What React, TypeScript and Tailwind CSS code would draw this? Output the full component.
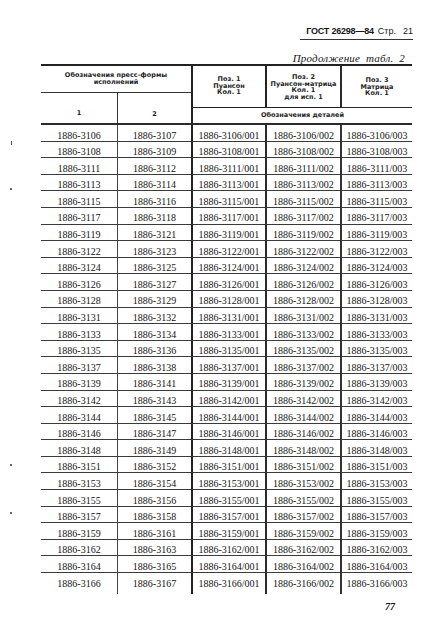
import React from "react";

const c1 = ["3106","3108","3111","3113","3115","3117","3119","3122","3124","3126","3128","3131","3133","3135","3137","3139","3142","3144","3146","3148","3151","3153","3155","3157","3159","3162","3164","3166"];
const c2 = ["3107","3109","3112","3114","3116","3118","3121","3123","3125","3127","3129","3132","3134","3136","3138","3141","3143","3145","3147","3149","3152","3154","3156","3158","3161","3163","3165","3167"];

export default function App() {
  return (
    <div className="relative w-[432px] h-[640px] overflow-hidden bg-white text-[#161616]">
      {/* scan specks */}
      <span className="absolute left-[11px] top-[141px] w-[1px] h-[4px] bg-[#555]" />
      <span className="absolute left-[10px] top-[188px] w-[2px] h-[2px] bg-[#666]" />
      <span className="absolute left-[10px] top-[464px] w-[2px] h-[2px] bg-[#666]" />
      <span className="absolute left-[10px] top-[512px] w-[2px] h-[2px] bg-[#666]" />

      {/* running head */}
      <div className="pl-[300px] pt-[26px]">
        <div className="w-[113px] border-b border-[#333] pb-[2px] flex justify-end items-baseline whitespace-nowrap text-[9px] leading-[11px] font-['Liberation_Sans',sans-serif]">
          <span className="font-bold tracking-[-0.2px]">ГОСТ 26298—84</span>
          <span className="ml-[4px]">Стр.</span>
          <span className="ml-[7px]">21</span>
        </div>
      </div>

      <div className="mt-[12px] pr-[27px] text-right italic text-[11px] leading-[12px] tracking-[0.2px] whitespace-nowrap font-['Liberation_Serif',serif]">
        Продолжение&nbsp; табл.&nbsp; 2
      </div>

      {/* table */}
      <div className="ml-[41px] w-[371px] border-t-2 border-[#222]">
        {/* header */}
        <div className="grid grid-cols-[76px_74px_74px_75px_72px] grid-rows-[27px_15px_15px] border-b-2 border-[#2a2a2a] text-[6.5px] leading-[6.5px] font-bold font-['DejaVu_Sans',sans-serif] text-[#1e1e1e]">
          <div className="col-start-1 col-span-2 row-start-1 border-b border-[#333] flex flex-col items-center justify-center pb-[1px]">
            <span>Обозначения пресс-формы</span>
            <span>исполнений</span>
          </div>
          <div className="col-start-1 row-start-2 row-span-2 flex items-end justify-center pb-[7px]">1</div>
          <div className="col-start-2 row-start-2 row-span-2 border-l border-[#333] flex items-end justify-center pb-[6px]">2</div>
          <div className="col-start-3 row-start-1 row-span-2 border-l-2 border-b border-[#222] flex flex-col items-center pt-[10px]">
            <span>Поз. 1</span>
            <span>Пуансон</span>
            <span>Кол. 1</span>
          </div>
          <div className="col-start-4 row-start-1 row-span-2 border-l-2 border-b border-[#222] flex flex-col items-center pt-[8px] gap-[0.2px]">
            <span>Поз. 2</span>
            <span>Пуансон-матрица</span>
            <span>Кол. 1</span>
            <span>для исп. 1</span>
          </div>
          <div className="col-start-5 row-start-1 row-span-2 border-l-2 border-b border-[#2a2a2a] flex flex-col items-center pt-[11px]">
            <span>Поз. 3</span>
            <span>Матрица</span>
            <span>Кол. 1</span>
          </div>
          <div className="col-start-3 col-span-3 row-start-3 border-l-2 border-[#222] flex items-center justify-center">
            Обозначения деталей
          </div>
        </div>

        {/* body */}
        <div className="grid grid-cols-[76px_74px_74px_75px_72px] text-[10px] leading-[10px] font-['Liberation_Serif',serif] text-[#141414]">
          {c1.map((a, i) => {
            const last = i === c1.length - 1;
            const row = last ? "h-[21px]" : "h-[16.6px] border-b border-b-[#3a3a3a]";
            const cell = `flex justify-center items-start pt-[5.5px] ${row}`;
            return (
              <React.Fragment key={a}>
                <div className={cell}>1886-{a}</div>
                <div className={`${cell} border-l border-l-[#444]`}>1886-{c2[i]}</div>
                <div className={`${cell} border-l-2 border-l-[#222]`}>1886-{a}/001</div>
                <div className={`${cell} border-l-2 border-l-[#2a2a2a]`}>1886-{a}/002</div>
                <div className={`${cell} border-l-2 border-l-[#333]`}>1886-{a}/003</div>
              </React.Fragment>
            );
          })}
        </div>
      </div>

      <div className="mt-[7px] pr-[37px] text-right text-[10px] leading-[12px] font-bold italic font-['Liberation_Serif',serif]">
        77
      </div>
    </div>
  );
}
